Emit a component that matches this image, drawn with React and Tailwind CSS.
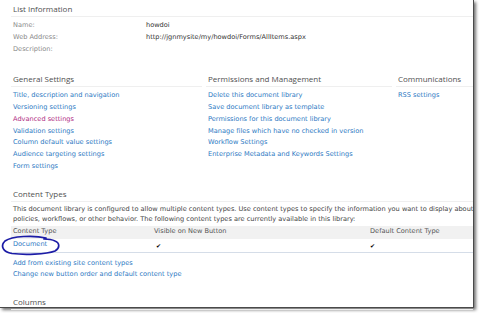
import React from "react";

const link = "text-[#2d79c3]";

const LinkList = ({ items }) => (
  <ul className="mt-[3px] pl-[2px]">
    {items.map((it) => (
      <li
        key={it.label}
        className={`h-[11.75px] leading-[11.75px] ${it.visited ? "text-[#b02c83]" : link}`}
      >
        {it.label}
      </li>
    ))}
  </ul>
);

const Heading = ({ children, className = "" }) => (
  <div
    className={`h-[16px] border-b border-[#efefef] pl-[2px] text-[8px] leading-[15px] text-[#505050] ${className}`}
    style={{ fontFamily: '"Open Sans", "Noto Sans", sans-serif' }}
  >
    {children}
  </div>
);

export default function App() {
  return (
    <div className="w-[479px] h-[313px] bg-white overflow-hidden">
      <div
        className="relative w-[474px] h-[308px] bg-white border-r border-b border-[#4a4a4a] shadow-[2px_2px_3px_rgba(0,0,0,0.55)] text-[6.6px]"
        style={{ fontFamily: '"DejaVu Sans", Verdana, sans-serif' }}
      >
        <div className="pl-[11px] pt-[1px]">
          {/* List Information */}
          <Heading>List Information</Heading>
          <div className="mt-[3px] pl-[2px]">
            <div className="flex h-[11.75px] leading-[11.75px]">
              <span className="w-[133px] text-[#8a8a8a]">Name:</span>
              <span className="text-[#333]">howdoi</span>
            </div>
            <div className="flex h-[11.75px] leading-[11.75px]">
              <span className="w-[133px] text-[#8a8a8a]">Web Address:</span>
              <span className="text-[#333]">http://jgnmysite/my/howdoi/Forms/AllItems.aspx</span>
            </div>
            <div className="flex h-[11.75px] leading-[11.75px]">
              <span className="w-[133px] text-[#8a8a8a]">Description:</span>
            </div>
          </div>

          {/* Settings columns */}
          <div className="mt-[16px] flex">
            <div className="w-[195px] pr-[4px]">
              <Heading>General Settings</Heading>
              <LinkList
                items={[
                  { label: "Title, description and navigation" },
                  { label: "Versioning settings" },
                  { label: "Advanced settings", visited: true },
                  { label: "Validation settings" },
                  { label: "Column default value settings" },
                  { label: "Audience targeting settings" },
                  { label: "Form settings" },
                ]}
              />
            </div>
            <div className="w-[190px] pr-[4px]">
              <Heading>Permissions and Management</Heading>
              <LinkList
                items={[
                  { label: "Delete this document library" },
                  { label: "Save document library as template" },
                  { label: "Permissions for this document library" },
                  { label: "Manage files which have no checked in version" },
                  { label: "Workflow Settings" },
                  { label: "Enterprise Metadata and Keywords Settings" },
                ]}
              />
            </div>
            <div className="flex-1">
              <Heading>Communications</Heading>
              <LinkList items={[{ label: "RSS settings" }]} />
            </div>
          </div>

          {/* Content Types */}
          <Heading className="mt-[13px]">Content Types</Heading>
          <p className="mt-[2px] pl-[2px] leading-[10px] text-[#444] whitespace-nowrap">
            This document library is configured to allow multiple content types. Use content types to specify the information you want to display about
            <br />
            policies, workflows, or other behavior. The following content types are currently available in this library:
          </p>
          <div className="mt-[2px]">
            <div className="flex h-[13px] items-center bg-[#f1f1f1] pl-[2px] text-[#555]">
              <span className="w-[141px]">Content Type</span>
              <span className="w-[216px]">Visible on New Button</span>
              <span>Default Content Type</span>
            </div>
            <div className="flex h-[14px] items-center border-b border-[#d5dde8] pl-[2px]">
              <span className={`w-[143px] ${link}`}>Document</span>
              <span className="w-[214px] text-[6px] text-black">✔</span>
              <span className="text-[6px] text-black">✔</span>
            </div>
          </div>
          <ul className="mt-[5px] pl-[2px]">
            <li className={`h-[11px] leading-[11px] ${link}`}>Add from existing site content types</li>
            <li className={`h-[11px] leading-[11px] ${link}`}>Change new button order and default content type</li>
          </ul>
          <Heading className="mt-[14px]">Columns</Heading>
        </div>

        {/* hand-drawn annotation around "Document" */}
        <svg
          className="absolute left-0 top-[233px]"
          width="64"
          height="24"
          viewBox="0 0 64 24"
        >
          <path
            d="M46 5 C34 2 12 3 5 8 C0 13 3 19 12 20.5 C24 22 46 21.5 55 18 C60 15 60 10 55 8 C52 6.5 48 6 44 6"
            fill="none"
            stroke="#1c1ca6"
            strokeWidth="1.7"
            strokeLinecap="round"
          />
        </svg>
      </div>
    </div>
  );
}
